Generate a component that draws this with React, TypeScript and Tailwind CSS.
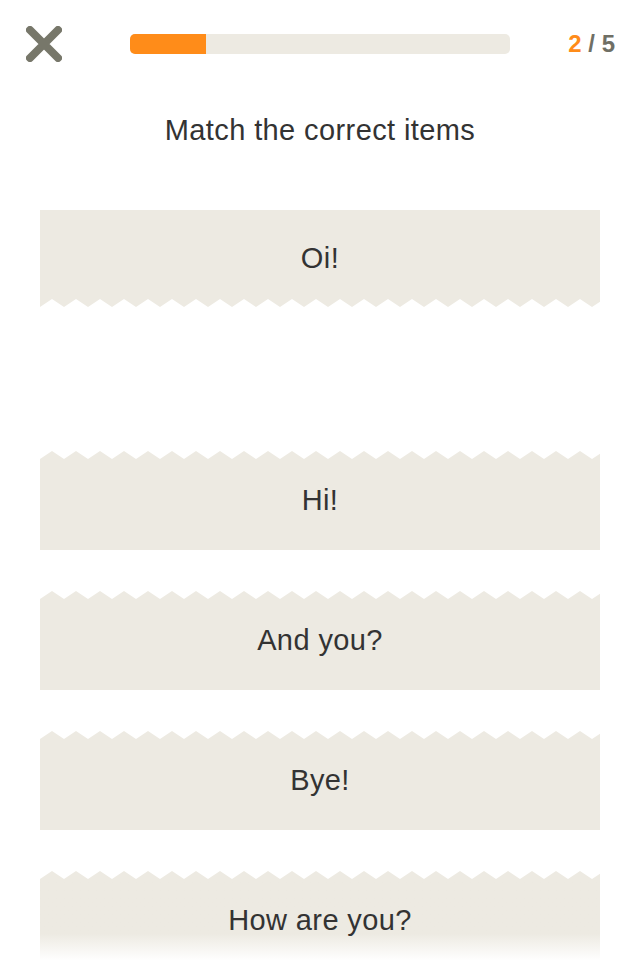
import React from "react";

type Props = {};

const CARD_W = 560;

// zigzag edge points for the torn card edges (24px period, 8px deep)
const zigzag = (side: "top" | "bottom") => {
  const pts: string[] = [];
  const base = side === "bottom" ? 0 : 8;
  pts.push(`0,${base}`);
  for (let x = 0; x <= CARD_W + 24; x += 24) {
    pts.push(`${x},8`, `${x + 12},0`);
  }
  pts.push(`${CARD_W + 36},${base}`);
  return pts.join(" ");
};

const Edge = ({ side }: { side: "top" | "bottom" }) => (
  <svg
    width={CARD_W}
    height={8}
    viewBox={`0 0 ${CARD_W} 8`}
    className="block overflow-hidden"
  >
    <polygon points={zigzag(side)} fill="#edeae2" />
  </svg>
);

const CloseIcon = () => (
  <svg width="36" height="36" viewBox="0 0 36 36">
    <path
      d="M4 4 L32 32 M32 4 L4 32"
      stroke="#77776a"
      strokeWidth="8"
      strokeLinecap="round"
      strokeLinejoin="round"
    />
  </svg>
);

const Answer = ({ label, fade }: { label: string; fade?: boolean }) => (
  <div className="flex flex-col">
    <Edge side="top" />
    <div
      className={`h-[91px] pb-[8px] flex items-center justify-center ${
        fade
          ? "bg-gradient-to-b from-[#edeae2] from-60% to-white to-90%"
          : "bg-[#edeae2]"
      }`}
    >
      <span className="text-[29px] tracking-[0.4px] text-[#333333]">
        {label}
      </span>
    </div>
  </div>
);

const App = (props: Props) => {
  return (
    <div
      className="w-[640px] h-[960px] overflow-hidden bg-white"
      style={{ fontFamily: '"Liberation Sans", Arial, sans-serif' }}
    >
      {/* header */}
      <header className="flex items-center h-[88px] pl-[26px] pr-[25px]">
        <CloseIcon />
        <div className="ml-[68px] w-[380px] h-[20px] rounded-[5px] bg-[#edeae2] overflow-hidden">
          <div className="w-[76px] h-full bg-[#ff8c19]" />
        </div>
        <div className="ml-auto text-[24px] font-bold text-[#6f6f65] leading-none">
          <span className="text-[#ff8c19]">2</span> / 5
        </div>
      </header>

      {/* question */}
      <h1 className="mt-[25px] text-center text-[29px] tracking-[0.4px] text-[#333333] leading-[34px]">
        Match the correct items
      </h1>

      <div className="mt-[63px] mx-[40px] flex flex-col">
        {/* prompt card */}
        <div className="flex flex-col">
          <div className="h-[89px] pt-[9px] bg-[#edeae2] flex items-center justify-center">
            <span className="text-[29px] tracking-[0.4px] text-[#333333]">
              Oi!
            </span>
          </div>
          <Edge side="bottom" />
        </div>

        {/* answer choices */}
        <div className="mt-[144px] flex flex-col gap-[41px]">
          <Answer label="Hi!" />
          <Answer label="And you?" />
          <Answer label="Bye!" />
          <Answer label="How are you?" fade />
        </div>
      </div>
    </div>
  );
};

export default App;
